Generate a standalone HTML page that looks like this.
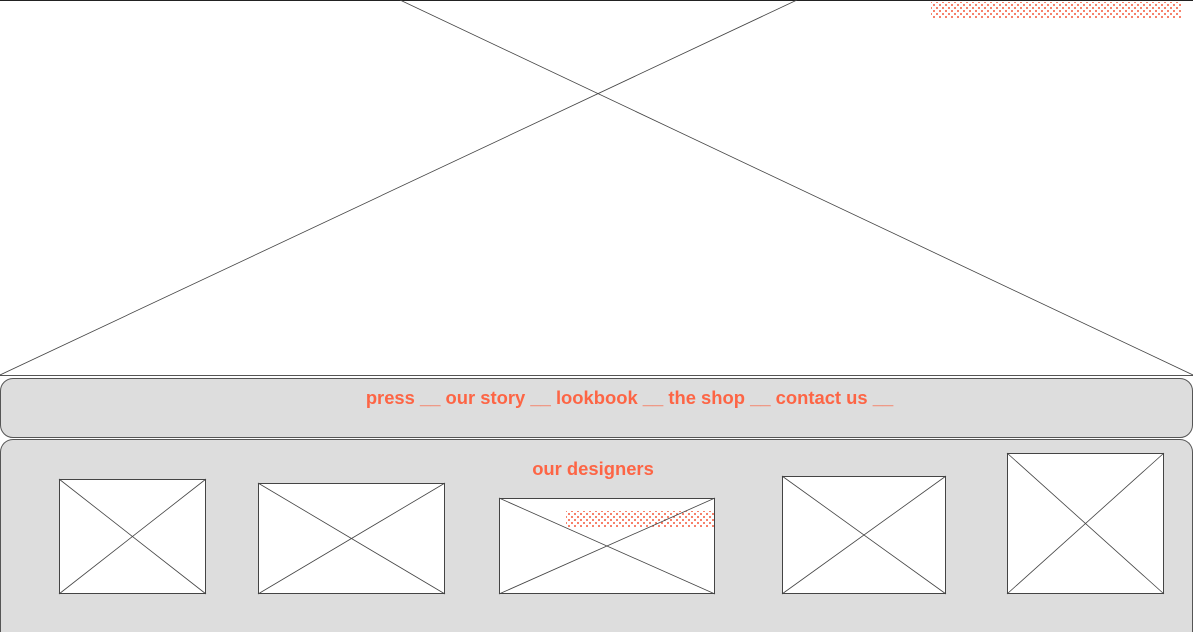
<!DOCTYPE html>
<html><head><meta charset="utf-8"><style>
html,body{margin:0;padding:0;width:1193px;height:632px;overflow:hidden;background:#fff;font-family:"Liberation Sans",Arial,sans-serif}
.a{position:absolute}
.dots{background-image:radial-gradient(circle,#f4573a 0.8px,transparent 1px),radial-gradient(circle,#f4573a 0.8px,transparent 1px);background-size:6px 6px;background-position:0 0,3px 3px}
.panel{background:#dddddd;border:1px solid #555;border-radius:13px;box-sizing:border-box}
.t{color:#fd6545;font-weight:bold;font-size:18.4px;text-align:center;white-space:nowrap}
.box{background:#fff;border:1px solid #444;box-sizing:border-box}
</style></head><body>
<div class="a" style="left:0;top:0;width:1193px;height:1px;background:#222"></div>
<div class="a dots" style="left:931px;top:2px;width:250px;height:16px"></div>
<div class="a" style="left:0;top:375px;width:1193px;height:1px;background:#555"></div>
<div class="a panel" style="left:0;top:378px;width:1193px;height:60px"></div>
<div class="a t" style="left:0;top:387px;width:1259px">press __ our story __ lookbook __ the shop __ contact us __</div>
<div class="a panel" style="left:0;top:439px;width:1193px;height:193px;border-bottom:0;border-bottom-left-radius:0;border-bottom-right-radius:0"></div>
<div class="a t" style="left:493px;top:458px;width:200px">our designers</div>
<div class="a box" style="left:59px;top:479px;width:147px;height:115px"></div>
<div class="a box" style="left:258px;top:483px;width:187px;height:111px"></div>
<div class="a box" style="left:499px;top:498px;width:216px;height:96px"></div>
<div class="a dots" style="left:566px;top:511px;width:149px;height:17px"></div>
<div class="a box" style="left:782px;top:476px;width:164px;height:118px"></div>
<div class="a box" style="left:1007px;top:453px;width:157px;height:141px"></div>
<svg class="a" style="left:0;top:0" width="1193" height="632" stroke="#444" stroke-width="0.8" fill="none">
<line x1="400" y1="0" x2="1193" y2="375"/><line x1="797" y1="0" x2="0" y2="375"/>
<line x1="59" y1="479" x2="206" y2="594"/><line x1="206" y1="479" x2="59" y2="594"/>
<line x1="258" y1="483" x2="445" y2="594"/><line x1="445" y1="483" x2="258" y2="594"/>
<line x1="499" y1="498" x2="715" y2="594"/><line x1="715" y1="498" x2="499" y2="594"/>
<line x1="782" y1="476" x2="946" y2="594"/><line x1="946" y1="476" x2="782" y2="594"/>
<line x1="1007" y1="453" x2="1164" y2="594"/><line x1="1164" y1="453" x2="1007" y2="594"/>
</svg>
</body></html>
